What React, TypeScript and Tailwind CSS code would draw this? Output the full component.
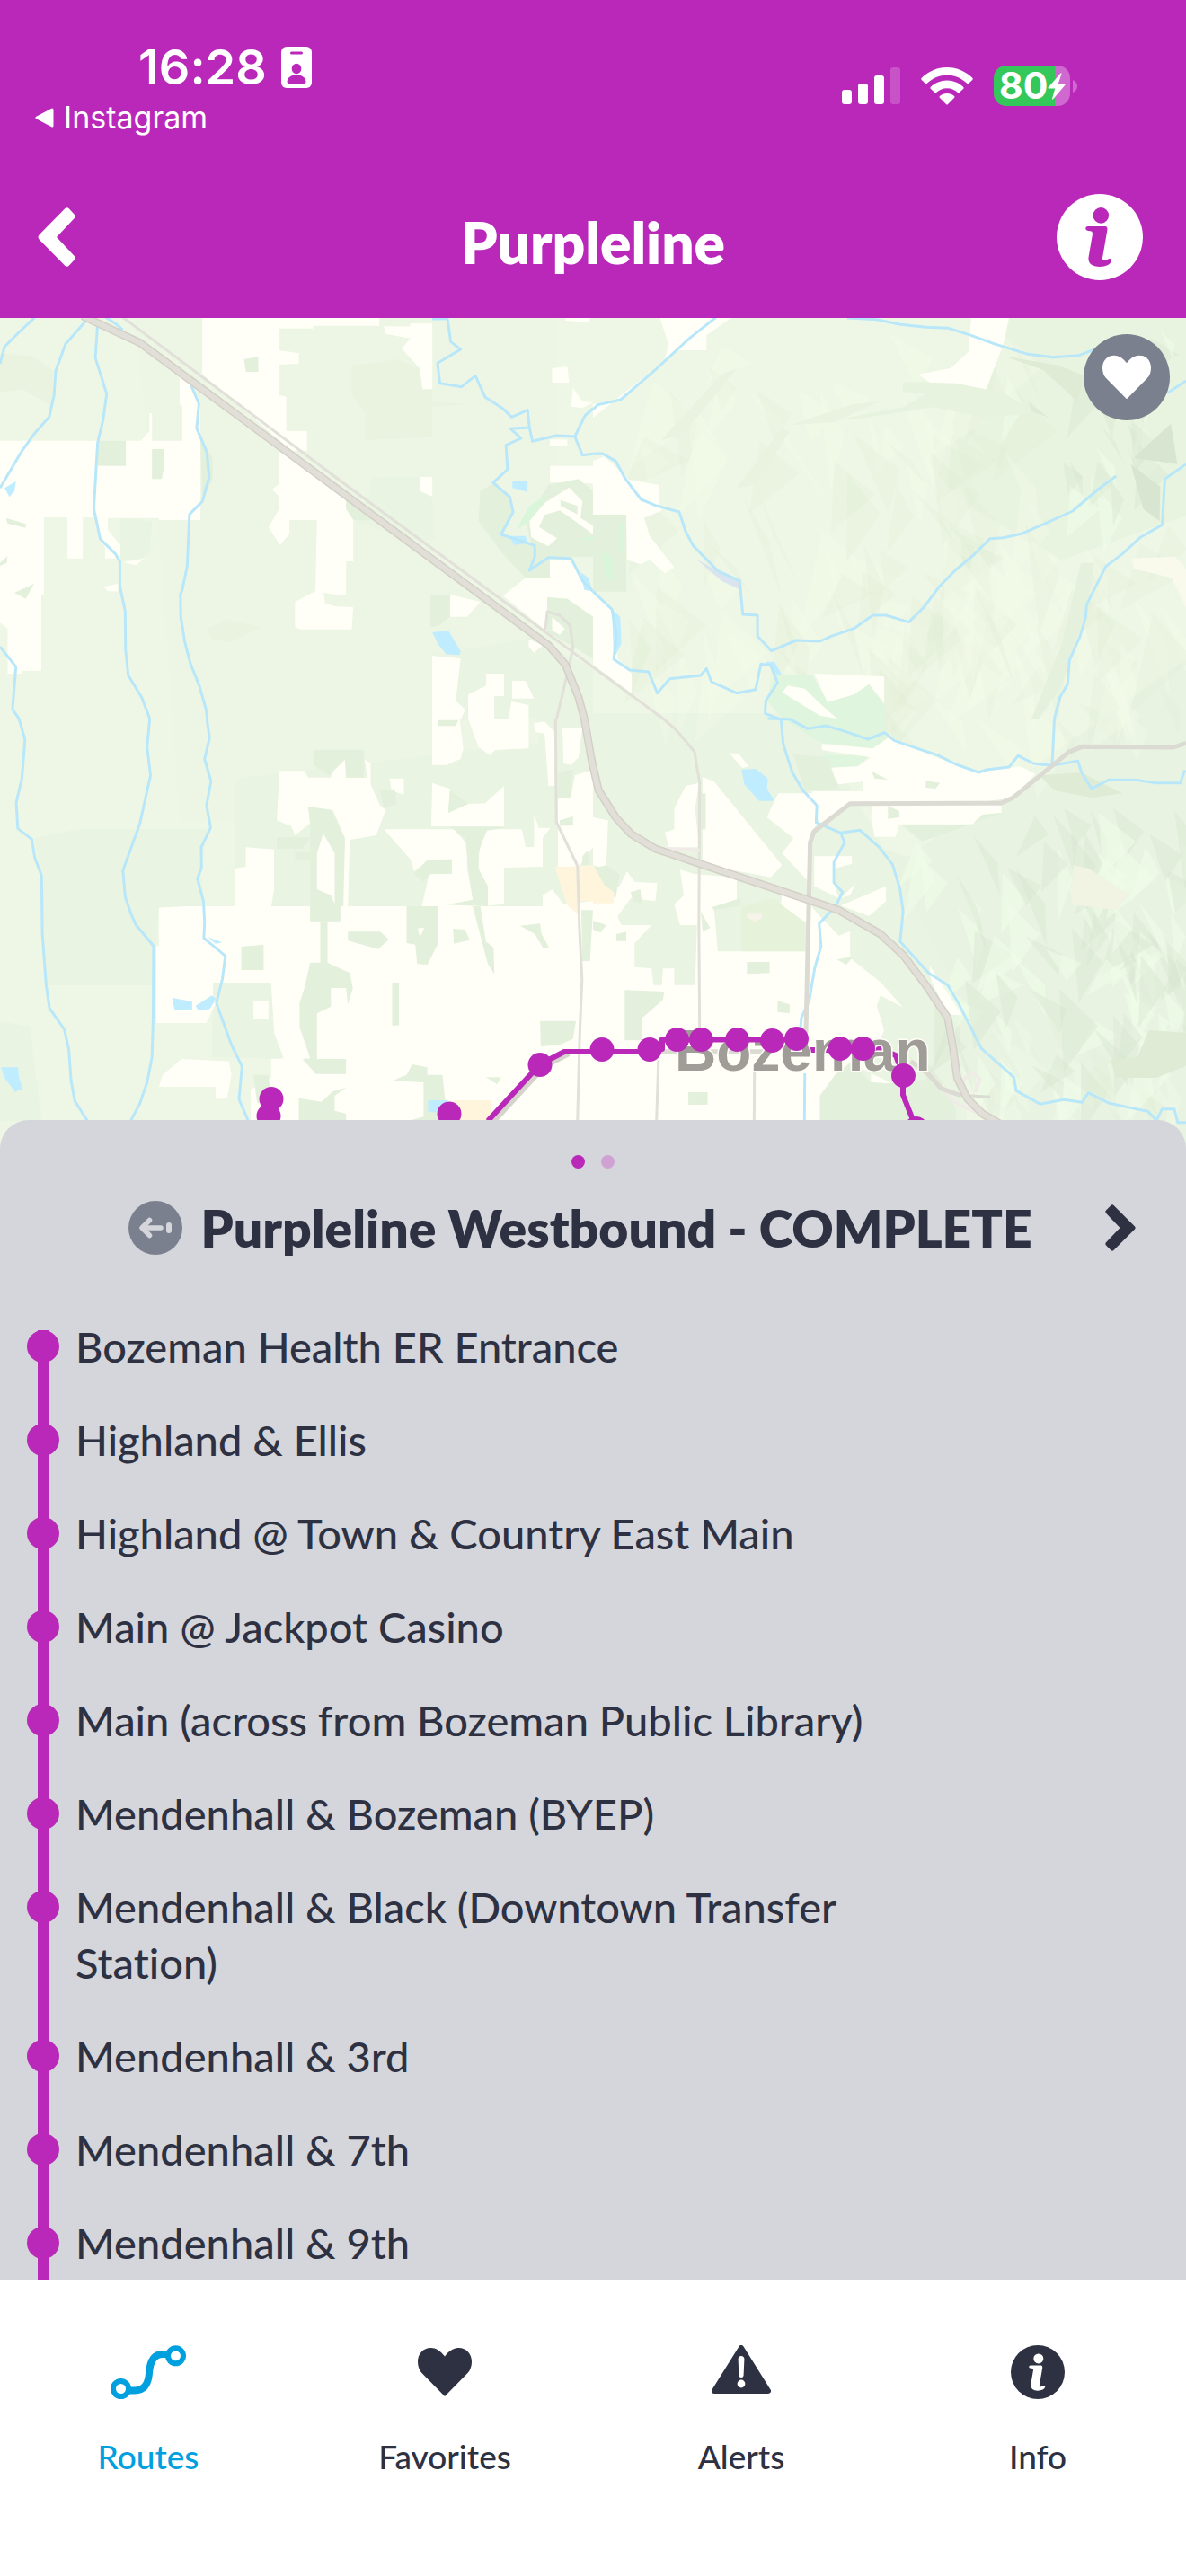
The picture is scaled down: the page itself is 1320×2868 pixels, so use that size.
import React from "react";

const PURPLE = "#ba28ba";
const CREAM = "#fffff8";
const LEAF = "#e3f0db";
const MINT = "#e9f4e2";
const WATER = "#bfecff";

const stops = [
  "Bozeman Health ER Entrance",
  "Highland & Ellis",
  "Highland @ Town & Country East Main",
  "Main @ Jackpot Casino",
  "Main (across from Bozeman Public Library)",
  "Mendenhall & Bozeman (BYEP)",
  "Mendenhall & Black (Downtown Transfer Station)",
  "Mendenhall & 3rd",
  "Mendenhall & 7th",
  "Mendenhall & 9th",
];

/* ---------- map ---------- */

function Areas({ fill, shapes }: { fill: string; shapes: string[] }) {
  return (
    <g fill={fill}>
      {shapes.map((s) => (
        <polygon key={s} points={s} />
      ))}
    </g>
  );
}

function Lines({ stroke, width, shapes }: { stroke: string; width: number; shapes: string[] }) {
  return (
    <g fill="none" stroke={stroke} strokeWidth={width} strokeLinejoin="round">
      {shapes.map((s) => (
        <polyline key={s} points={s} vectorEffect="non-scaling-stroke" />
      ))}
    </g>
  );
}

/* The map is made of four tiles, each in its own survey units. */
const NW = "translate(0 -4) scale(0.42092 0.33333)";
const NE = "translate(660 -4) scale(0.42092 0.33333)";
const SW = "translate(0 446) scale(0.42092 0.33333)";
const SE = "translate(660 446) scale(0.42092 0.33333)";

/* Repeatable scatter of slim facets for the relief of the hills. */
function facets(count: number, seed: number, x0: number, y0: number, w: number, h: number, size: number) {
  let s = seed;
  const next = () => {
    s = (s * 16807) % 2147483647;
    return s / 2147483647;
  };
  return Array.from({ length: count }, () => {
    const x = x0 + next() * w;
    const y = y0 + next() * h;
    const dx = size * (0.2 + next() * 0.5);
    const dy = size * (0.5 + next());
    const lean = (next() - 0.35) * size;
    const pts = [x, y, x + dx, y + dy * 0.45, x + lean, y + dy].map((n) => Math.round(n));
    return { points: pts.join(" "), light: next() > 0.5 };
  });
}

const relief = [
  ...facets(100, 77, 1020, 545, 300, 290, 62),
  ...facets(24, 907, 1120, 10, 200, 180, 50),
];
const softRelief = [
  ...facets(100, 13, 700, 10, 460, 380, 80),
  ...facets(60, 55, 960, 230, 340, 220, 80),
  ...facets(30, 411, 1100, 780, 200, 110, 60),
];

const routeStops = [
  [302, 869.5], [299, 888.5], [500, 886], [601, 831.5], [670, 814.5], [723, 814.5], [753.5, 803.5],
  [780.5, 803.5], [820.5, 803.5], [859.5, 804.5], [886.5, 802.5], [935, 813.5], [960.5, 813.5],
  [1005.5, 843.5], [1019.5, 902.5],
];

function RouteMap() {
  return (
    <svg
      viewBox="0 0 1320 929"
      preserveAspectRatio="xMidYMin slice"
      className="block h-[929px] w-full"
      role="img"
      aria-label="Map of the Purpleline around Bozeman"
    >
      <rect width="1320" height="929" fill="#eef7e5" />
      <polygon points="150,0 620,0 620,440 560,560 200,560 180,280" fill="#edf6e5" />
      <polygon points="890,560 1010,600 1320,380 1320,929 1130,929 1000,720" fill="#e8f4e1" />
      <polygon points="1090,0 1320,0 1320,220 1180,270 1080,210 1060,120" fill="#e8f4df" />
      <polygon points="600,440 900,440 1000,620 1060,740 1080,929 600,929" fill={MINT} />

      <g>
        {softRelief.map((f, i) => (
          <polygon key={i} points={f.points} fill={f.light ? "#f3fbe9" : "#dfebd5"} opacity={f.light ? 0.4 : 0.25} />
        ))}
        {relief.map((f, i) => (
          <polygon key={i} points={f.points} fill={f.light ? "#f0fde9" : "#d6e5cf"} opacity={f.light ? 0.5 : 0.4} />
        ))}
      </g>

      <g transform={NW}>
        <Areas
          fill="#e9f3e0"
          shapes={[
            "930,170 1000,160 1050,150 1143,200 1143,290 1230,300 1143,310 1143,410 965,420 965,330 930,270",
            "0,130 90,140 140,190 140,310 60,250 0,260",
            "545,1050 600,1020 690,1045 610,1095 560,1085",
          ]}
        />
        <Areas
          fill={MINT}
          shapes={[
            "980,543 1110,543 1110,590 1143,610 1150,755 1080,755 935,687 980,600",
            "318,680 402,690 395,800 360,825 318,820",
            "1143,1140 1400,1080 1568,1180 1568,1350 1143,1350",
          ]}
        />
        <Areas
          fill={CREAM}
          shapes={[
            "535,12 1003,12 1003,38 828,38 828,47 739,47 739,120 790,130 790,165 739,168 739,270 757,275 757,390 812,390 812,455 739,455 739,565 720,585 738,610 738,650 710,710 740,770 765,735 765,687 838,687 834,925 780,960 780,1045 795,1052 930,1052 934,978 885,975 860,965 855,930 915,940 915,825 934,825 934,687 915,650 915,610 535,200",
            "0,422 373,422 395,390 395,330 402,330 402,422 482,422 482,305 475,300 475,200 500,225 530,290 530,687 420,687 420,680 285,680 285,720 318,770 318,815 278,815 278,780 255,700 250,678 219,678 219,815 178,815 178,678 116,678 116,935 109,940 109,1190 57,1190 57,1200 20,1200 20,1050 0,1030",
            "1015,40 1085,40 1085,30 1143,30 1143,250 1117,250 1110,180 1062,115 1085,80 1020,65",
            "1460,180 1500,175 1505,228 1460,228",
            "1515,245 1540,290 1568,295 1540,312 1510,308",
            "1495,12 1556,12 1556,28 1495,20",
            "1454,418 1500,418 1500,440 1454,440",
            "1454,506 1568,506 1568,565 1454,560",
            "1110,543 1143,543 1143,608 1110,590",
            "1190,936 1270,960 1235,1010 1190,1010",
            "1330,940 1400,870 1454,880 1454,820 1510,820 1568,930 1568,1010 1500,950 1447,945 1447,1060",
            "1143,1140 1218,1150 1205,1290 1230,1320 1220,1350 1143,1350",
            "1285,1200 1333,1200 1333,1275 1307,1275 1307,1350 1238,1350 1238,1270 1285,1240",
            "1354,1223 1390,1225 1412,1283 1354,1283",
            "1352,1293 1398,1305 1398,1350 1345,1350",
            "325,828 380,815 360,838",
            "273,910 312,900 312,925 285,925",
          ]}
        />
        <Areas
          fill={LEAF}
          shapes={[
            "259,422 333,422 333,506 259,506",
            "402,450 435,450 435,500 428,550 402,550",
            "16,680 68,700 68,713 20,698",
            "38,930 90,900 68,950",
            "0,830 20,808 18,830 0,840",
            "645,150 683,142 683,192 650,192",
            "530,410 562,480 562,550 535,620",
            "1270,590 1310,560 1350,610 1355,660 1330,735 1400,760 1454,820 1454,880 1390,880 1330,800 1265,690",
            "1450,570 1530,550 1568,590 1568,810 1420,810 1405,770 1390,690",
            "1138,936 1190,936 1190,1010 1160,1040 1138,1045",
            "915,610 985,687 935,687 915,650",
            "1447,945 1500,950 1568,1010 1568,1150 1447,1060",
          ]}
        />
        <Areas fill="#d9f6da" shapes={["1400,640 1450,600 1400,690 1365,720", "1530,750 1568,740 1568,755"]} />
        <Areas
          fill={CREAM}
          shapes={[
            "1400,690 1440,630 1505,578 1540,625 1535,680 1568,705 1568,735 1520,690 1480,655 1440,670 1425,710 1473,748 1450,775 1405,745",
            "1460,1010 1493,1050 1480,1070 1460,1055",
            "1398,1085 1435,1105 1412,1130 1398,1110",
          ]}
        />
        <Areas fill={LEAF} shapes={["1482,620 1527,640 1527,668 1482,640"]} />
        <Areas
          fill={WATER}
          shapes={[
            "1355,558 1395,558 1395,593 1355,580",
            "1143,1062 1185,1055 1218,1125 1215,1138 1180,1135 1160,1105",
            "12,580 42,558 38,590 25,610",
            "1345,740 1390,740 1395,765 1360,770",
            "1535,860 1555,880 1568,925 1545,920",
          ]}
        />
        <Lines
          stroke="#b9e7fa"
          width={3}
          shapes={[
            "92,10 50,60 12,108 0,165",
            "228,20 173,100 147,190 143,270 130,343 93,395 57,458 0,580",
            "258,35 252,145 282,265 273,350 258,430 248,650 265,750 305,800 317,825 317,910 331,990 332,1120 339,1205 375,1280 396,1350",
            "280,10 310,35 325,52",
            "505,235 526,298 520,380 547,460 553,545 535,625 501,668 495,840 482,920 477,935 478,1010 488,1090 503,1165 527,1240 545,1320 548,1350",
            "0,1110 42,1177 33,1320 50,1350",
            "1143,15 1183,15 1192,92 1218,117 1157,163 1163,230 1220,242 1257,205 1283,277 1330,315 1353,343 1395,320 1400,378 1350,382 1378,414 1338,437 1342,518 1304,562 1348,610 1357,660 1325,735 1414,772 1414,810 1400,855 1450,812 1510,815 1540,890 1568,925",
            "1400,378 1408,424 1470,405 1520,408 1547,338 1568,315",
            "1520,408 1540,470 1568,466",
          ]}
        />
      </g>

      <g transform={NE}>
        <Areas
          fill={CREAM}
          shapes={[
            "177,12 365,12 300,70 300,120 225,120 0,345 0,300 75,280 190,150 200,100",
            "1000,12 1100,12 1085,100 1040,250 905,240 860,200 945,180 993,125",
            "0,490 30,475 60,510 95,552 175,570 175,640 183,655 135,680 150,740 215,845 190,865 150,820 125,835 90,820 88,669 0,669",
            "0,935 50,985 65,1150 102,1200 102,1265 0,1170",
          ]}
        />
        <Areas fill={LEAF} shapes={["0,669 88,669 88,926 0,926"]} />
        <Areas fill="#e7f3df" shapes={["670,345 820,310 880,265 820,260 820,225 960,230 1080,260 1180,330 1040,345 900,310 820,325 690,352"]} />
        <Areas fill="#fafaec" shapes={["1425,815 1540,810 1568,850 1568,980 1530,880 1430,850"]} />
        <Areas fill="#e0f5dd" shapes={["480,1200 580,1205 620,1295 730,1235 775,1310 775,1350 500,1350 460,1290"]} />
        <Areas fill="#d9f6da" shapes={["20,790 55,815 55,890 35,880", "68,700 82,700 82,795 70,795"]} />
        <Areas
          fill={CREAM}
          shapes={["585,1200 770,1210 770,1300 730,1235 690,1270 620,1295", "500,1262 515,1240 560,1250 600,1300 645,1350 600,1340"]}
        />
        <Areas
          fill="#d8e5d0"
          shapes={["1422,500 1500,575 1498,690 1455,650", "1480,420 1528,365 1545,500 1430,480"]}
        />
        <Areas fill="#dfebd4" shapes={["1090,140 1230,170 1300,205 1280,290 1190,185", "1150,290 1205,345 1160,325"]} />
        <Areas fill="#e5f1dd" shapes={["1290,830 1325,830 1310,970 1280,1080 1240,1240 1180,1350 1160,1350 1240,1100"]} />
        <Areas fill="#e9f3e0" shapes={["380,180 240,400 180,420 340,200", "520,390 430,570 380,580 500,380", "690,300 760,290 640,360 520,370"]} />
        <Areas fill="#d9e4ef" shapes={["272,817 330,857 388,892 385,917 340,890"]} />
        <Areas fill={WATER} shapes={["50,985 72,1010 75,1100 55,1150", "455,1160 480,1160 500,1205 488,1205"]} />
        <Lines
          stroke="#b9e7fa"
          width={3}
          shapes={[
            "325,10 255,80 165,185 73,285 12,302 0,318",
            "672,12 750,17 810,33 880,43 940,46 1000,70 1060,98 1150,133 1215,143 1285,137 1330,115",
            "1520,262 1568,222",
            "0,466 25,465 60,490 85,548 127,618 165,638 228,660 245,725 265,773 330,857 388,890 396,1002 435,1005 435,1075 472,1124 537,1089 600,1092 630,1075 690,1049 740,1005 775,1005 835,1028 875,978 915,910 958,855 1005,805 1050,749 1085,746 1135,732 1190,702 1268,657 1335,585 1383,540",
            "1568,500 1512,550 1505,703 1447,745 1400,800 1356,842 1305,970 1303,1010 1288,1075 1260,1155 1255,1235 1235,1278 1220,1350",
            "0,925 50,985 62,1070 55,1152 97,1188 147,1194 170,1265 203,1217 285,1206 300,1183 313,1227 380,1265 430,1253 444,1168 470,1172 488,1230 457,1290 455,1333 490,1350",
          ]}
        />
      </g>

      <g transform={SW}>
        <Areas
          fill={MINT}
          shapes={[
            "200,370 550,370 530,500 540,627 490,627 420,632 413,760 413,890 120,890 110,520 90,400",
            "620,200 1568,60 1568,700 620,640",
            "563,882 717,882 725,1050 750,1137 560,1130",
            "0,1010 80,1030 110,1345 0,1345",
          ]}
        />
        <Areas
          fill={CREAM}
          shapes={[
            "1143,0 1215,0 1225,100 1218,135 1180,155 1143,155",
            "1238,0 1398,0 1398,100 1310,105 1295,122 1265,95",
            "739,175 805,175 815,197 875,197 880,155 915,137 915,197 970,197 965,137 980,150 980,220 1005,290 1020,305 995,390 925,405 920,627 905,627 912,400 880,305 815,295 820,350 780,390 770,360 732,340",
            "650,430 725,437 725,570 717,627 622,627 622,500 650,495",
            "1015,370 1200,370 1235,420 1235,500 1250,600 1280,627 1115,627 1135,520 1195,518 1195,470 1135,472 1095,510 1085,470",
            "1143,215 1190,235 1185,315 1238,285 1283,283 1333,225 1333,360 1140,360",
            "1290,370 1380,370 1390,430 1412,428 1412,320 1425,365 1455,365 1435,400 1435,495 1333,498 1333,620 1290,625 1265,500 1268,430",
            "1412,15 1440,10 1467,45 1467,225 1450,225 1440,50 1415,45",
            "1487,30 1540,30 1530,130 1510,155 1490,150",
            "1475,265 1510,260 1520,190 1568,170 1568,430 1530,495 1475,495",
            "1030,200 1068,200 1068,255 1035,240",
            "420,632 490,627 1435,627 1435,590 1460,570 1490,620 1568,610 1568,1345 663,1345 663,1240 717,1200 717,1137 750,1135 725,1050 717,882 563,882 563,925 575,940 545,1017 413,1017 413,760 420,760",
            "420,1230 430,1190 480,1137 605,1145 612,1190 600,1270 570,1270 570,1230",
          ]}
        />
        <Areas
          fill={LEAF}
          shapes={[
            "1157,5 1212,5 1205,25 1157,25",
            "828,105 962,105 962,197 915,197 912,137 870,190 828,155",
            "815,295 875,305 912,400 908,627 900,627 900,677 820,677 820,350",
            "732,397 820,397 800,435 732,435",
            "780,447 820,447 820,470 780,470",
            "847,677 866,677 866,815 925,850 933,900 920,955 915,900 875,900 875,962 838,985 838,1137 915,1137 915,1187 835,1187 800,1137 820,1135 792,1030 792,950 805,900 820,815 847,815",
            "920,712 1005,712 1028,738 1000,770 920,742",
            "1075,627 1157,627 1157,755 1130,822 1103,820 1098,755 1075,750",
            "1198,702 1230,705 1242,740 1200,752",
            "1250,627 1270,627 1285,745 1305,765 1307,853 1290,820",
            "1375,692 1428,685 1432,720 1453,768 1435,765 1415,720",
            "1037,882 1055,882 1055,1025 1037,1025",
            "638,762 697,755 697,840 638,840",
            "1428,1010 1523,1010 1515,1070 1480,1090 1430,1095",
            "1037,1210 1075,1190 1090,1155 1130,1165 1130,1190 1170,1190 1177,1275 1160,1345 1075,1345 1120,1330 1120,1215",
            "1130,472 1195,470 1195,518 1135,520 1120,545 1095,520",
            "1285,1198 1325,1198 1315,1222",
            "670,1190 710,1190 717,1280 680,1285",
            "790,1268 850,1280 880,1245 915,1232 885,1260 885,1310 915,1320 915,1345 790,1345",
            "1475,180 1515,170 1508,265 1475,265",
            "1480,340 1515,327 1515,358 1480,358",
            "1190,362 1345,362 1285,375 1265,450 1265,500 1290,560 1290,627 1180,622 1250,605 1240,520 1230,400",
            "1005,240 1045,240 1048,285 1015,300",
            "1190,240 1238,285 1185,315",
            "1540,460 1555,440 1555,490 1540,490",
            "1537,640 1568,640 1560,810 1540,810",
          ]}
        />
        <Areas
          fill={CREAM}
          shapes={["838,450 855,385 885,450 885,620 875,590 838,570", "670,942 710,942 710,1002 670,1002", "1105,700 1122,700 1110,730"]}
        />
        <Areas
          fill="#fff5dc"
          shapes={["1467,497 1568,490 1568,610 1530,610 1530,655 1500,625", "1200,1275 1300,1275 1300,1345 1185,1345"]}
        />
        <Areas
          fill={WATER}
          shapes={[
            "1132,1275 1185,1275 1165,1315 1132,1315",
            "550,730 588,748 570,752",
            "455,933 508,945 508,975 462,975",
            "517,960 560,925 572,935 555,970 525,975",
            "3,1165 48,1165 50,1200 60,1235 40,1247 12,1200",
          ]}
        />
        <Lines
          stroke="#b9e7fa"
          width={3}
          shapes={[
            "50,0 66,70 58,200 43,280 47,367 84,403 92,465 110,525 112,720 122,890 131,968 170,1038 182,1105 188,1210 198,1278 232,1345 260,1400",
            "396,0 389,95 398,190 370,350 325,508 331,595 347,655 360,690 406,760 405,1000 402,1130 389,1215 370,1285 345,1345",
            "547,0 554,65 541,135 558,210 546,290 557,365 532,430 533,497 522,535 538,610 541,680 539,733 596,793 588,870 572,950 612,1090 640,1162 632,1272 657,1345",
          ]}
        />
      </g>

      <g transform={SE}>
        <Areas fill="#e0f5dd" shapes={["500,0 775,0 775,105 600,80", "605,120 730,125 700,160 620,165"]} />
        <Areas
          fill={CREAM}
          shapes={[
            "290,195 320,210 500,490 470,530 300,490 290,470",
            "215,300 245,225 280,215 270,300 280,430 200,430 190,380 215,370",
            "360,115 385,118 412,160 395,165",
            "490,250 580,250 595,350 575,380 570,545 500,450 530,400 460,330 470,300",
            "580,243 715,243 715,210 650,220 620,165 700,160 735,130 605,105 605,85 740,100 780,65 960,155 1020,180 1130,160 1170,185 1110,265 1020,280 680,280 600,350 580,300",
            "740,290 1080,290 1080,315 1030,320 1005,353 810,353 800,395 745,395 735,330",
            "585,460 685,460 685,485 640,500 640,560 650,600 585,560",
            "655,625 775,560 775,610 730,660",
            "655,600 695,550 680,590",
            "600,660 650,725 680,710 680,800 760,880 820,965 760,925 750,960 770,1040 735,1150 735,1215 800,1225 680,1150 640,1190 600,1260 600,1345 0,1345 0,330 40,340 35,500 0,490 0,617 70,560 90,510 110,545 170,550 165,610 100,600 65,660 75,690 155,690 110,750 110,830 155,835 160,890 182,890 185,835 215,835 215,890 270,890 275,690 230,690 215,620 240,590 230,505 270,520 380,530 380,610 320,635 330,778 565,778 565,680 495,640 500,590 565,610",
            "890,825 975,990 940,990 895,880",
          ]}
        />
        <Areas
          fill={LEAF}
          shapes={[
            "600,1345 600,1260 640,1190 680,1150 735,1215 820,1220 900,1200 960,1300 960,1345",
            "84,907 188,912 185,940 130,1000 130,1075 84,1075",
            "252,1248 303,1248 303,1290 252,1290",
            "407,813 467,813 467,850 407,853",
            "488,943 520,955 520,985 488,980",
            "645,805 688,795 670,822",
            "62,720 88,712 88,743 62,743",
            "0,675 35,690 20,715 0,705",
            "880,208 918,215 905,235 880,230",
            "735,175 780,205 745,200",
            "780,290 810,310 810,330 780,335",
            "815,355 1000,355 1030,322 1080,315 930,385 870,410",
            "315,630 390,600 390,625 320,640",
            "0,500 35,490 70,520 60,600 10,560",
            "530,120 620,130 650,235 560,240",
            "100,580 125,570 130,620 105,610",
            "285,645 310,700 290,710",
            "280,250 298,250 298,370 282,370",
          ]}
        />
        <Areas fill="#e6f3da" shapes={["392,630 475,600 560,680 565,778 392,778"]} />
        <Areas fill="#f7f2ea" shapes={["407,652 447,652 447,665 430,678 407,665"]} />
        <Areas fill="#fff5dc" shapes={["0,490 30,555 55,580 55,617 0,617"]} />
        <Areas fill="#f1f3e3" shapes={["1270,490 1310,500 1420,590 1380,640 1265,620"]} />
        <Areas fill="#dfebd4" shapes={["1370,1140 1440,1130 1470,1040 1568,1050 1568,1160 1490,1200 1380,1200", "1180,190 1290,180 1400,250 1320,265 1220,240"]} />
        <Areas fill={WATER} shapes={["393,170 430,168 462,200 460,235 480,275 440,275 400,220"]} />
        <Lines
          stroke="#b9e7fa"
          width={3}
          shapes={[
            "462,0 520,2 568,34 615,24 660,40 727,69 771,47 797,74 910,122 960,153 1020,180 1040,171 1100,162 1124,124 1165,150 1213,157 1282,142 1292,180 1318,235 1363,205 1435,205 1490,215 1553,215 1565,172",
            "1220,0 1214,157",
            "497,0 503,85 527,180 555,240 592,290 590,347 655,382 706,373 757,430 792,487 812,570 820,645 812,745 887,850 938,890 968,955 1027,1102 1113,1198 1119,1243 1183,1288 1245,1273 1293,1282 1310,1250 1365,1285 1467,1312 1490,1342 1505,1304 1537,1304 1546,1349 1568,1349",
            "655,382 665,415 637,480 637,548 660,580 640,630 598,685 603,760 586,835 572,940 551,1000 547,1060",
            "560,1185 559,1345",
          ]}
        />
      </g>

      {/* roads */}
      <g transform={NW}>
        <Lines stroke="#e1e0d9" width={3} shapes={["325,10 915,570 1568,1178", "1442,1055 1447,993 1480,1005 1508,1040 1515,1115 1500,1200 1472,1350"]} />
        <Lines stroke="#d3d0c7" width={9} shapes={["218,5 370,95 915,605 1450,1105 1495,1170 1530,1280 1545,1350"]} />
        <Lines stroke="#e1dfd8" width={6} shapes={["218,5 370,95 915,605 1450,1105 1495,1170 1530,1280 1545,1350"]} />
      </g>
      <g transform={NE}>
        <Lines stroke="#e1e0d9" width={3} shapes={["0,1178 185,1350"]} />
      </g>
      <g transform={SW}>
        <Lines stroke="#e1e0d9" width={3} shapes={["1469,0 1471,345 1527,492 1532,700 1539,870 1533,1050 1527,1345"]} />
      </g>
      <g transform={SE}>
        <Lines stroke="#e1e0d9" width={3} shapes={["185,0 220,38 268,110 282,215 280,700 282,1050", "173,1140 168,1345", "427,1180 426,1345"]} />
        <Lines stroke="#f0ebe6" width={4} shapes={["200,435 282,440", "975,1210 1003,1182 1023,1203 1010,1250", "930,1245 955,1280 1020,1320"]} />
        <Lines stroke="#dbdad3" width={5} shapes={["563,1050 573,480 574,415 584,378 680,284 1080,282 1110,265 1258,112 1293,94 1535,96 1568,82", "175,1112 450,1112", "840,1145 885,1185 920,1235 970,1258"]} />
        <Lines stroke="#dbdad3" width={3} shapes={["970,1258 1050,1264"]} />
        <Lines stroke="#d3d0c7" width={9} shapes={["-23,0 -5,130 0,160 15,240 60,330 100,385 165,435 650,640 760,720 820,790 880,890 938,1000 952,1100 963,1200 990,1270 1030,1320 1085,1360"]} />
        <Lines stroke="#e1dfd8" width={6} shapes={["-23,0 -5,130 0,160 15,240 60,330 100,385 165,435 650,640 760,720 820,790 880,890 938,1000 952,1100 963,1200 990,1270 1030,1320 1085,1360"]} />
      </g>

      {/* route */}
      <polyline points="548,896 606,833 633,819" fill="none" stroke="#d5d4cb" strokeWidth="6" />
      <polyline
        points="543,894 601,831 628,817 723,817 737,814 737,803 887,803 898,815 961,815 980,814 997,821 1005,843 1005,865 1020,903"
        fill="none"
        stroke={PURPLE}
        strokeWidth="6"
        strokeLinejoin="round"
      />
      <text
        x="751"
        y="838"
        fontSize="64"
        fontWeight="700"
        fill="#a09c97"
        stroke="#fffff8"
        strokeWidth="3"
        paintOrder="stroke"
        className="font-['Liberation_Sans',sans-serif]"
      >
        Bozeman
      </text>
      <polyline points="723,815 737,812 737,804 887,804" fill="none" stroke={PURPLE} strokeWidth="5" />
      <g fill={PURPLE}>
        {routeStops.map(([x, y]) => (
          <circle key={`${x}-${y}`} cx={x} cy={y} r="13.5" />
        ))}
      </g>
    </svg>
  );
}

/* ---------- icons ---------- */

function InfoIcon({ className, mark }: { className: string; mark: string }) {
  return (
    <svg viewBox="0 0 96 96" className={className} aria-hidden="true">
      <circle cx="48" cy="48" r="48" fill="currentColor" />
      <g fill={mark}>
        <circle cx="49.3" cy="23.9" r="8.8" />
        <path d="M32.4 39 Q32 36 35 36 H54 Q56.8 36 56.4 40 L51 71.3 Q50.8 74.6 53.5 73.9 L58.5 72 Q61.6 71.6 61.4 74 Q59 81 48 81 Q35.4 81 35.4 71.3 L40 44.5 Q40 41.6 37.5 41.3 Q32.6 41 32.4 39 Z" />
      </g>
    </svg>
  );
}

function HeartIcon({ className }: { className: string }) {
  return (
    <svg viewBox="0 0 60 54" className={className} aria-hidden="true">
      <path
        fill="currentColor"
        d="M30 9.5 C25 3 20 0 14.5 0 C6 0 0 6.500 0 15.500 C0 20 1.500 25 4.500 28 L30 54 L55.500 28 C58.500 25 60 20 60 15.500 C60 6.500 54 0 45.500 0 C40 0 35 3 30 9.500 Z"
      />
    </svg>
  );
}

function RoutesIcon() {
  return (
    <svg viewBox="0 0 84 60" className="h-[60px] w-[84px]" fill="none" stroke="currentColor" aria-hidden="true">
      <circle cx="11.5" cy="48.500" r="8.500" strokeWidth="6" />
      <circle cx="72.500" cy="11.800" r="8.500" strokeWidth="6" />
      <path d="M21 50.500 H27 C37 50.500 42 44 43 31 C44 17 49 10 58 10 H63" strokeWidth="8" />
    </svg>
  );
}

function AlertIcon() {
  return (
    <svg viewBox="0 0 66 60" className="h-[60px] w-[66px]" aria-hidden="true">
      <path d="M33 3 L63 51 H3 Z" fill="currentColor" stroke="currentColor" strokeWidth="6" strokeLinejoin="round" />
      <path d="M29.600 15.500 Q29.800 12 33 12 Q36.200 12 36.400 15.500 L35.600 33.500 Q35.400 36 33 36 Q30.600 36 30.400 33.500 Z" fill="#fff" />
      <circle cx="33" cy="43" r="4.400" fill="#fff" />
    </svg>
  );
}

function StatusBar() {
  return (
    <div className="flex items-start justify-between pt-[45px] font-['Inter',sans-serif]">
      <div className="pl-[38px]">
        <div className="flex h-[60px] items-center gap-4 pl-[116px]">
          <span className="text-[54px] leading-[60px] font-semibold">16:28</span>
          <svg viewBox="0 0 34 46" className="h-[46px] w-[34px]" aria-hidden="true">
            <rect width="34" height="46" rx="6" fill="#fff" />
            <rect x="10" y="5.500" width="14" height="3" rx="1.500" fill={PURPLE} />
            <ellipse cx="17" cy="24.500" rx="5.300" ry="5.800" fill={PURPLE} />
            <path d="M6.500 39 C7 34 11 31.500 17 31.500 C23 31.500 27 34 27.500 39 Q27.500 41 25.500 41 H8.500 Q6.500 41 6.500 39 Z" fill={PURPLE} />
          </svg>
        </div>
        <a href="#instagram" className="flex h-[52px] items-center gap-[11px] text-[34px] leading-[52px]">
          <svg viewBox="0 0 22 22" className="size-[22px]" aria-hidden="true">
            <path d="M20 2 L3 11 L20 20 Z" fill="#fff" stroke="#fff" strokeWidth="3" strokeLinejoin="round" />
          </svg>
          Instagram
        </a>
      </div>
      <div className="flex items-center gap-[23px] pt-[28px] pr-[121px]">
        <svg viewBox="0 0 65 44" className="h-[44px] w-[65px]" fill="#fff" aria-hidden="true">
          <rect x="0" y="26" width="11" height="16" rx="3" />
          <rect x="18" y="19" width="11" height="23" rx="3" />
          <rect x="36" y="10" width="11" height="32" rx="3" />
          <rect x="54" y="1" width="11" height="41" rx="3" opacity="0.2" />
        </svg>
        <svg viewBox="0 0 58 44" className="h-[44px] w-[58px]" fill="#fff" aria-hidden="true">
          <path d="M29 1 C18 1 8 5.500 0.500 13 Q0 14 0.500 14.800 L5 19 Q6 19.700 6.800 18.800 C13 13 20.500 9.800 29 9.800 C37.500 9.800 45 13 51.200 18.800 Q52 19.700 53 19 L57.500 14.800 Q58 14 57.500 13 C50 5.500 40 1 29 1 Z" />
          <path d="M29 15.500 C22 15.500 15.500 18.300 10.700 23 Q10 24 10.700 24.800 L15.300 29 Q16.300 29.600 17 29 C20.500 26 24.500 24.300 29 24.300 C33.500 24.300 37.500 26 41 29 Q41.700 29.600 42.700 29 L47.300 24.800 Q48 24 47.300 23 C42.500 18.300 36 15.500 29 15.500 Z" />
          <path d="M29 30 C26 30 23 31 20.800 33 Q20.200 34 20.800 34.700 L28 42 Q29 43 30 42 L37.200 34.700 Q37.800 34 37.200 33 C35 31 32 30 29 30 Z" />
        </svg>
        <div className="flex items-center gap-[3px]">
          <div className="flex h-[45px] w-[85px] items-center rounded-[14px] bg-[linear-gradient(to_right,#34c759_80%,#cf68cf_80%)] pl-[6px]">
            <span className="text-[41px] leading-[45px] font-bold">80</span>
            <svg viewBox="0 0 20 30" className="h-[30px] w-[20px]" aria-hidden="true">
              <path d="M14.500 0.500 L0.500 16.500 Q0.200 17.500 1.200 17.500 H8.200 L5 29 Q5.200 30 6.200 29.200 L19.600 13.500 Q20 12.300 18.800 12.300 H11.800 L15.500 1 Q15.500 0 14.500 0.500 Z" fill="#fff" />
            </svg>
          </div>
          <svg viewBox="0 0 5 14" className="h-[14px] w-[5px]" aria-hidden="true">
            <path d="M0 0 Q5 2 5 7 Q5 12 0 14 Z" fill="#cf68cf" />
          </svg>
        </div>
      </div>
    </div>
  );
}

const tabs = [
  { label: "Routes", icon: <RoutesIcon />, active: true },
  { label: "Favorites", icon: <HeartIcon className="h-[54px] w-[60px]" /> },
  { label: "Alerts", icon: <AlertIcon /> },
  { label: "Info", icon: <InfoIcon className="size-[60px]" mark="#fff" /> },
];

export default function App() {
  return (
    <div className="flex h-screen flex-col overflow-hidden bg-white font-['Lato',sans-serif] text-[#2d3142] [font-variant-ligatures:none]">
      <header className="shrink-0 bg-[#ba28ba] pb-[42px] text-white">
        <StatusBar />
        <div className="mt-[59px] flex items-center pr-12 pl-9">
          <button type="button" aria-label="Back" className="flex h-24 w-[108px] items-center">
            <svg viewBox="0 0 54 66" className="h-[66px] w-[54px]" aria-hidden="true">
              <path d="M8 30 L36 1.500 Q38.500 -1 41 1.500 L46.500 7.500 Q48.500 10 46.500 12.300 L27 33 L46.500 53.700 Q48.500 56 46.500 58.500 L41 64.500 Q38.500 67 36 64.500 L8 36 Q5 33 8 30 Z" fill="#fff" />
            </svg>
          </button>
          <h1 className="flex-1 pt-3 text-center text-[64px] leading-[72px] font-extrabold">Purpleline</h1>
          <button type="button" aria-label="Route information" className="size-24">
            <InfoIcon className="size-24" mark={PURPLE} />
          </button>
        </div>
      </header>

      <section className="relative shrink-0">
        <RouteMap />
        <button
          type="button"
          aria-label="Add to favorites"
          className="absolute top-[18px] right-[18px] flex size-24 items-center justify-center rounded-full bg-[#7b808e] text-white"
        >
          <HeartIcon className="h-[50px] w-[54px]" />
        </button>
      </section>

      <main className="relative -mt-9 flex min-h-0 flex-1 flex-col overflow-hidden rounded-t-[32px] bg-[#d5d6dc] pt-[39px]">
        <div className="flex shrink-0 justify-center gap-[18px]">
          <span className="size-[15px] rounded-full bg-[#ba28ba]" />
          <span className="size-[15px] rounded-full bg-[#cfa2d3]" />
        </div>
        <div className="mt-[30px] flex shrink-0 items-center pl-[84px]">
          <div className="flex flex-1 items-center justify-center gap-5">
            <svg viewBox="0 0 60 60" className="size-[60px] shrink-0" aria-hidden="true">
              <circle cx="30" cy="30" r="30" fill="#7b808e" />
              <g fill="none" stroke="#d5d6dc" strokeWidth="6" strokeLinecap="round" strokeLinejoin="round">
                <path d="M36 30 H18 M23.500 21.500 L15 30 L23.500 38.500" strokeWidth="5.500" />
                <path d="M45 27 V33" />
              </g>
            </svg>
            <h2 className="text-[57px] leading-[72px] font-extrabold whitespace-nowrap">Purpleline Westbound - COMPLETE</h2>
          </div>
          <button type="button" aria-label="Next direction" className="flex h-[72px] w-28 items-center justify-end pr-14">
            <svg viewBox="0 0 34 52" className="h-[52px] w-[34px]" aria-hidden="true">
              <path d="M6.500 1 Q8 -0.500 9.500 1 L33 24.500 Q34.300 26 33 27.500 L9.500 51 Q8 52.500 6.500 51 L1 45.500 Q-0.300 44 1 42.300 L16.500 26 L1 9.700 Q-0.300 8 1 6.500 Z" fill="currentColor" />
            </svg>
          </button>
        </div>

        <ol className="mt-[65px] min-h-0">
          {stops.map((stop, i) => (
            <li key={stop} className="flex pl-[30px]">
              <div className={i === 0 ? "flex w-9 justify-center pt-[13px]" : "flex w-9 justify-center"}>
                <div className={i === 0 ? "flex w-3 flex-col items-center bg-[#ba28ba]" : "flex w-3 flex-col items-center bg-[#ba28ba] pt-[13px]"}>
                  <span className="size-9 shrink-0 rounded-full bg-[#ba28ba]" />
                </div>
              </div>
              <a href="#stop" className="max-w-[900px] pb-[42px] pl-[18px] text-[47px] leading-[62px] font-medium">
                {stop}
              </a>
            </li>
          ))}
        </ol>
      </main>

      <nav className="relative grid h-[329px] shrink-0 grid-cols-4 bg-white pt-[72px]">
        {tabs.map((tab) => (
          <a
            key={tab.label}
            href={`#${tab.label.toLowerCase()}`}
            className={tab.active ? "flex flex-col items-center gap-10 text-[#00a0df]" : "flex flex-col items-center gap-10"}
          >
            <span className="flex h-[60px] items-center">{tab.icon}</span>
            <span className="text-[37px] leading-[48px] font-medium">{tab.label}</span>
          </a>
        ))}
      </nav>
    </div>
  );
}
